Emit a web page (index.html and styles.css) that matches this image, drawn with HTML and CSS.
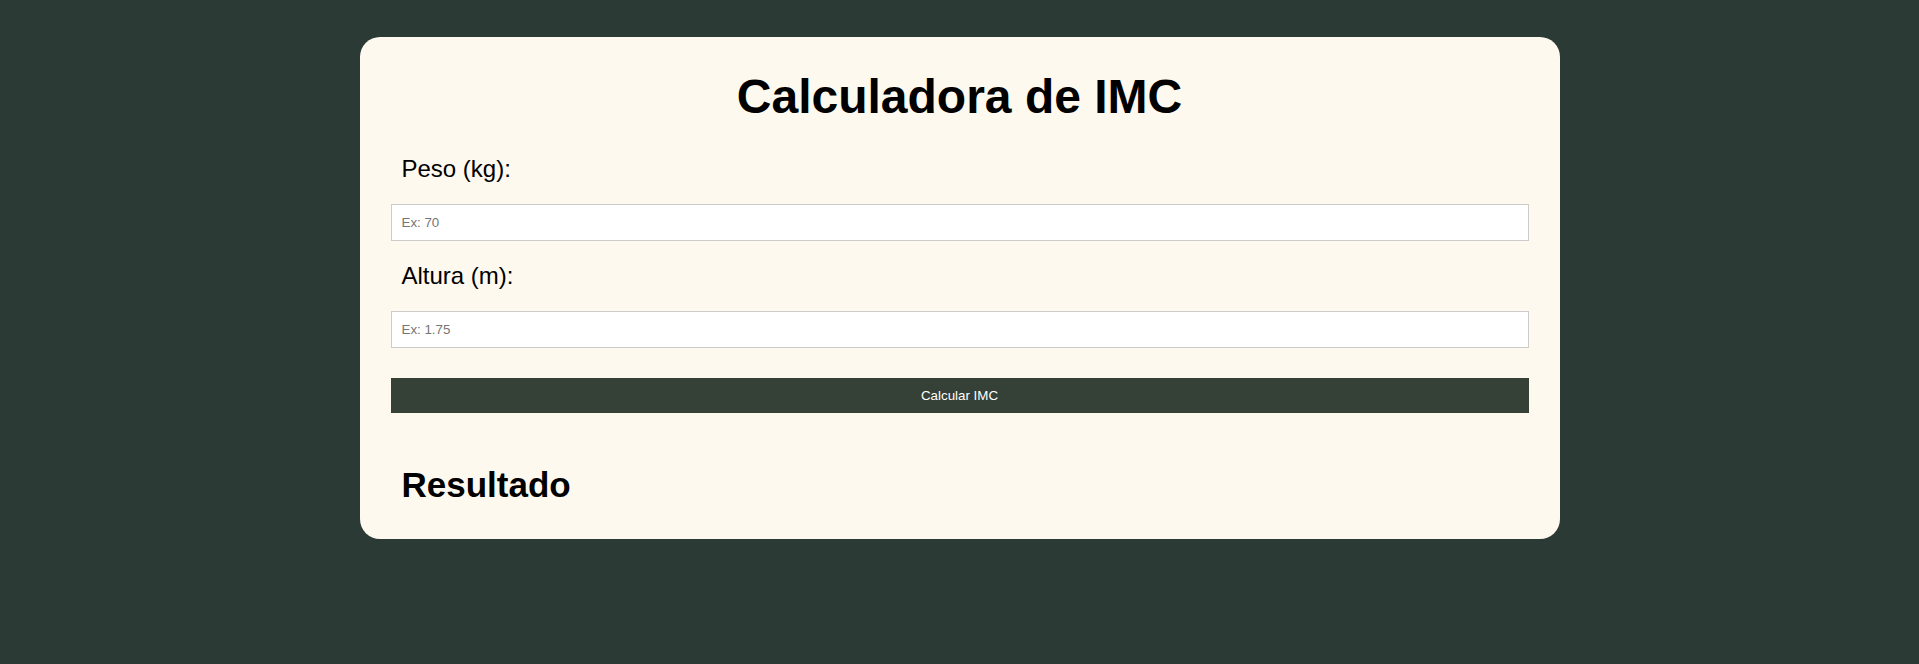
FILE: index.html
```html
<!DOCTYPE html>
<html lang="pt">
<head>
<meta charset="utf-8">
<title>Calculadora de IMC</title>
<link rel="stylesheet" href="styles.css">
</head>
<body>
  <main class="card">
    <h1 class="title">Calculadora de IMC</h1>
    <form class="form">
      <label class="label" for="peso">Peso (kg):</label>
      <input class="input" id="peso" type="number" placeholder="Ex: 70">
      <label class="label" for="altura">Altura (m):</label>
      <input class="input input-last" id="altura" type="number" placeholder="Ex: 1.75">
      <button class="button" type="button">Calcular IMC</button>
    </form>
    <h2 class="result-title">Resultado</h2>
  </main>
</body>
</html>
```
FILE: styles.css
```css
html, body {
  margin: 0;
  padding: 0;
}
body {
  background: #2b3a34;
  font-family: "Liberation Sans", Arial, sans-serif;
  color: #000;
  padding-top: 37px;
  min-height: 664px;
  box-sizing: border-box;
}
.card {
  width: 1200px;
  box-sizing: border-box;
  margin: 0 auto;
  background: #fef9ee;
  border-radius: 20px;
  padding: 32px 31px 34px;
}
.title {
  margin: 0 0 31px;
  text-align: center;
  font-size: 48px;
  font-weight: bold;
  line-height: normal;
}
.form {
  display: flex;
  flex-direction: column;
}
.label {
  display: block;
  font-size: 24px;
  padding-left: 11px;
  margin-bottom: 21px;
}
.input {
  width: 100%;
  box-sizing: border-box;
  padding: 10px;
  border: 1px solid #cccccc;
  background: #fff;
  font-family: "Liberation Sans", Arial, sans-serif;
  font-size: 13.333px;
  margin: 0 0 21px;
  outline: none;
}
.input-last {
  margin-bottom: 30px;
}
.input::placeholder {
  color: #757575;
}
.button {
  width: 100%;
  padding: 10px;
  border: none;
  background: #354036;
  color: #fff;
  font-family: "Liberation Sans", Arial, sans-serif;
  font-size: 13.333px;
  cursor: pointer;
}
.result-title {
  margin: 52px 0 0;
  padding-left: 11px;
  font-size: 35px;
  font-weight: bold;
}
```
